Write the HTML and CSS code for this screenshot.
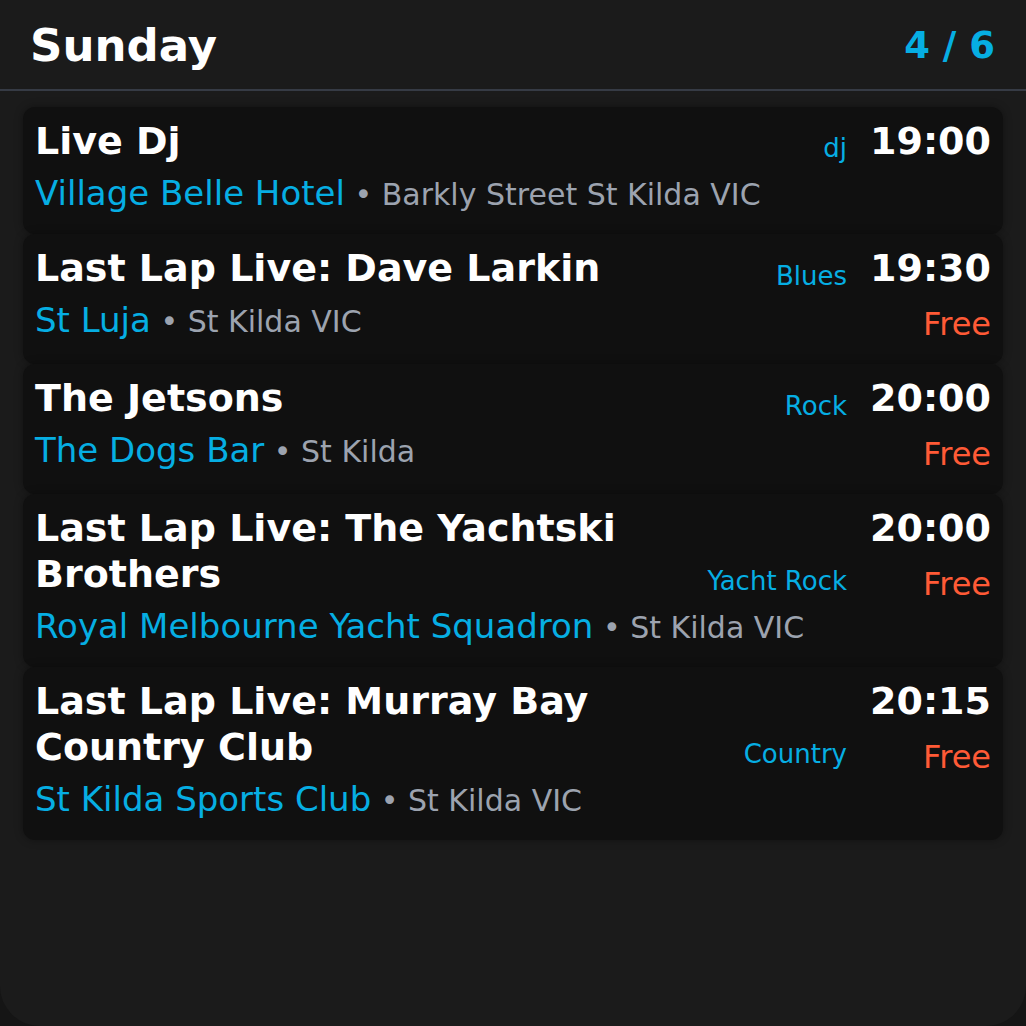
FILE: index.html
```html
<!DOCTYPE html>
<html lang="en">
<head>
<meta charset="utf-8">
<title>Sunday</title>
<link rel="stylesheet" href="styles.css">
</head>
<body>
<div class="screen">
  <header class="head">
    <h1 class="day">Sunday</h1>
    <div class="count">4 / 6</div>
  </header>
  <div class="list">
    <div class="card">
      <div class="main">
        <div class="top"><div class="title">Live Dj</div><div class="genre">dj</div></div>
        <div class="venue">Village Belle Hotel<span class="addr"> • Barkly Street St Kilda VIC</span></div>
      </div>
      <div class="side"><div class="time">19:00</div></div>
    </div>
    <div class="card">
      <div class="main">
        <div class="top"><div class="title">Last Lap Live: Dave Larkin</div><div class="genre">Blues</div></div>
        <div class="venue">St Luja<span class="addr"> • St Kilda VIC</span></div>
      </div>
      <div class="side"><div class="time">19:30</div><div class="price">Free</div></div>
    </div>
    <div class="card">
      <div class="main">
        <div class="top"><div class="title">The Jetsons</div><div class="genre">Rock</div></div>
        <div class="venue">The Dogs Bar<span class="addr"> • St Kilda</span></div>
      </div>
      <div class="side"><div class="time">20:00</div><div class="price">Free</div></div>
    </div>
    <div class="card">
      <div class="main">
        <div class="top"><div class="title">Last Lap Live: The Yachtski Brothers</div><div class="genre">Yacht Rock</div></div>
        <div class="venue">Royal Melbourne Yacht Squadron<span class="addr"> • St Kilda VIC</span></div>
      </div>
      <div class="side"><div class="time">20:00</div><div class="price">Free</div></div>
    </div>
    <div class="card">
      <div class="main">
        <div class="top"><div class="title">Last Lap Live: Murray Bay Country Club</div><div class="genre">Country</div></div>
        <div class="venue">St Kilda Sports Club<span class="addr"> • St Kilda VIC</span></div>
      </div>
      <div class="side"><div class="time">20:15</div><div class="price">Free</div></div>
    </div>
  </div>
</div>
</body>
</html>
```
FILE: styles.css
```css
html, body {
  margin: 0;
  padding: 0;
  background: #151515;
}
body {
  font-family: "DejaVu Sans", "Liberation Sans", sans-serif;
  line-height: 1.2;
}
.screen {
  width: 1026px;
  height: 1026px;
  box-sizing: border-box;
  background: #1b1b1b;
  border-radius: 0 0 40px 40px;
  overflow: hidden;
}
.head {
  display: flex;
  align-items: center;
  justify-content: space-between;
  padding: 19px 31px 16px 30px;
  border-bottom: 2px solid #363b45;
}
.day {
  margin: 0;
  font-size: 45px;
  font-weight: bold;
  color: #ffffff;
}
.count {
  font-size: 37px;
  font-weight: bold;
  color: #06aee3;
}
.list {
  padding: 16px 23px 0;
  display: flex;
  flex-direction: column;
}
.card {
  display: flex;
  align-items: flex-start;
  background: #101010;
  border-radius: 12px;
  padding: 12px 12px 21px 12px;
  box-shadow: 0 0 8px rgba(0, 0, 0, 0.35);
}
.main {
  flex: 1;
  min-width: 0;
  display: flex;
  flex-direction: column;
  gap: 8px;
}
.top {
  display: flex;
  align-items: flex-end;
  gap: 24px;
}
.title {
  flex: 1;
  font-size: 38px;
  font-weight: bold;
  color: #ffffff;
  max-width: 600px;
}
.genre {
  margin-left: auto;
  font-size: 26px;
  color: #06aee3;
  white-space: nowrap;
}
.venue {
  font-size: 34px;
  color: #06aee3;
  white-space: nowrap;
}
.addr {
  font-size: 30px;
  color: #9ca3af;
}
.side {
  width: 120px;
  margin-left: 24px;
  display: flex;
  flex-direction: column;
  align-items: flex-end;
}
.time {
  font-size: 38px;
  font-weight: bold;
  color: #ffffff;
}
.price {
  margin-top: 13px;
  font-size: 32px;
  color: #ff5a36;
}
```
